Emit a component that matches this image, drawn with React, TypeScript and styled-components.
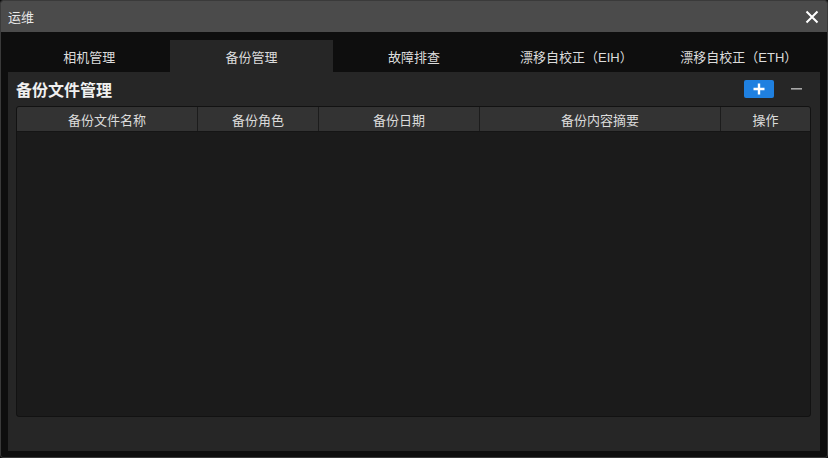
import styled, { createGlobalStyle } from "styled-components";

const GlobalStyle = createGlobalStyle`
  html, body {
    margin: 0;
    padding: 0;
    background: #0e0e0e;
  }
  * {
    box-sizing: border-box;
  }
`;

const font = `"Liberation Sans", "Noto Sans CJK SC", sans-serif`;

const Window = styled.div`
  width: 828px;
  height: 458px;
  display: flex;
  flex-direction: column;
  background: #0e0e0e;
  border: 1px solid #3a3a3a;
  border-radius: 3px;
  overflow: hidden;
  font-family: ${font};
  color: #dcdcdc;
`;

const TitleBar = styled.div`
  height: 31px;
  flex-shrink: 0;
  display: flex;
  align-items: center;
  justify-content: space-between;
  padding: 0 7px 0 7px;
  background: #4b4b4b;
  font-size: 13px;
  color: #e8e8e8;
`;

const CloseButton = styled.div`
  width: 16px;
  height: 16px;
  display: flex;
  align-items: center;
  justify-content: center;
`;

const TabBar = styled.div`
  display: grid;
  grid-template-columns: repeat(5, 1fr);
  padding: 8px 7px 0 7px;
  flex-shrink: 0;
`;

const Tab = styled.div<{ $active?: boolean }>`
  height: 32px;
  display: flex;
  align-items: center;
  justify-content: center;
  font-size: 13px;
  color: #dcdcdc;
  background: ${(p) => (p.$active ? "#262626" : "transparent")};
`;

const Panel = styled.div`
  flex: 1;
  margin: 0 7px 6px 7px;
  background: #262626;
  padding: 8px 9px 34px 8px;
  display: flex;
  flex-direction: column;
`;

const PanelHeader = styled.div`
  height: 18px;
  margin-bottom: 8px;
  display: flex;
  align-items: center;
  justify-content: space-between;
`;

const Heading = styled.div`
  font-size: 16px;
  font-weight: bold;
  color: #f0f0f0;
`;

const Actions = styled.div`
  display: flex;
  align-items: center;
  gap: 16px;
  padding-right: 9px;
`;

const AddButton = styled.div`
  width: 30px;
  height: 18px;
  border-radius: 2px;
  background: #1f80e0;
  display: flex;
  align-items: center;
  justify-content: center;
`;

const RemoveButton = styled.div`
  width: 12px;
  height: 18px;
  display: flex;
  align-items: center;
  justify-content: center;
`;

const Table = styled.div`
  flex: 1;
  background: #1b1b1b;
  border: 1px solid #121212;
  border-radius: 3px;
  overflow: hidden;
`;

const HeadRow = styled.div`
  display: grid;
  grid-template-columns: 180px 121px 161px 241px 1fr;
  height: 25px;
  background: #333333;
  border-bottom: 1px solid #151515;
`;

const HeadCell = styled.div`
  display: flex;
  align-items: center;
  justify-content: center;
  font-size: 13px;
  color: #dcdcdc;
  border-left: 1px solid #1c1c1c;
  &:first-child {
    border-left: none;
  }
`;

const tabs = ["相机管理", "备份管理", "故障排查", "漂移自校正（EIH）", "漂移自校正（ETH）"];
const columns = ["备份文件名称", "备份角色", "备份日期", "备份内容摘要", "操作"];

const App = () => {
  return (
    <>
      <GlobalStyle />
      <Window>
        <TitleBar>
          <span>运维</span>
          <CloseButton>
            <svg width="14" height="14" viewBox="0 0 14 14">
              <path d="M1.5 1.5 L12.5 12.5 M12.5 1.5 L1.5 12.5" stroke="#ffffff" strokeWidth="2" />
            </svg>
          </CloseButton>
        </TitleBar>
        <TabBar>
          {tabs.map((t) => (
            <Tab key={t} $active={t === "备份管理"}>
              {t}
            </Tab>
          ))}
        </TabBar>
        <Panel>
          <PanelHeader>
            <Heading>备份文件管理</Heading>
            <Actions>
              <AddButton>
                <svg width="12" height="12" viewBox="0 0 12 12">
                  <path d="M6 0.5 V11.5 M0.5 6 H11.5" stroke="#ffffff" strokeWidth="2.4" />
                </svg>
              </AddButton>
              <RemoveButton>
                <svg width="11" height="2" viewBox="0 0 11 2">
                  <rect width="11" height="1.6" fill="#a8a8a8" />
                </svg>
              </RemoveButton>
            </Actions>
          </PanelHeader>
          <Table>
            <HeadRow>
              {columns.map((c) => (
                <HeadCell key={c}>{c}</HeadCell>
              ))}
            </HeadRow>
          </Table>
        </Panel>
      </Window>
    </>
  );
};

export default App;
